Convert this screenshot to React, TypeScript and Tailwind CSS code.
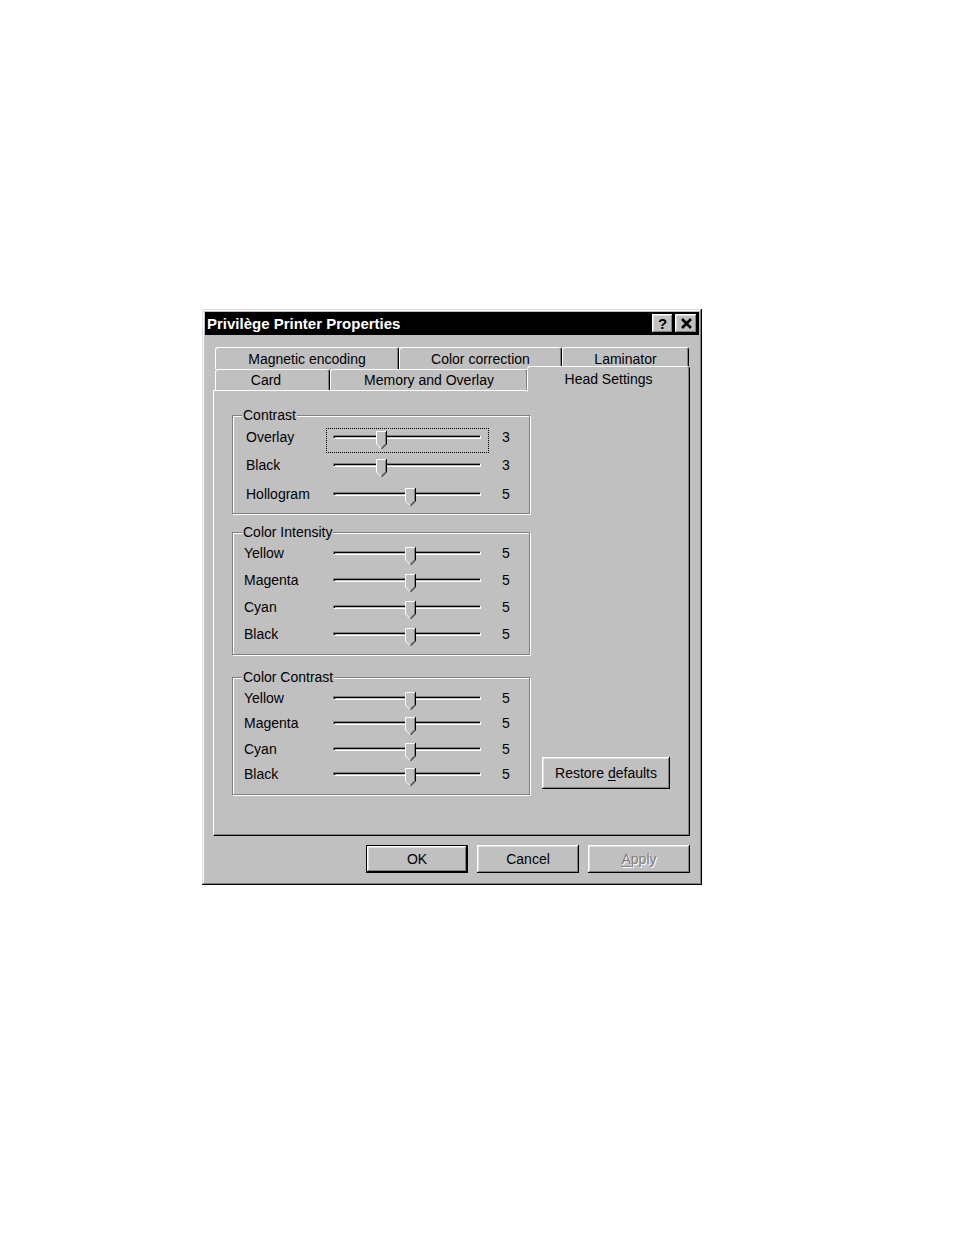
import React from "react";

type Row = { label: string; value: number; focus?: boolean };

const bevel =
  "shadow-[inset_-1px_-1px_0_#000,inset_1px_1px_0_#fff,inset_-2px_-2px_0_#808080,inset_2px_2px_0_#dfdfdf]";

function Thumb({ value }: { value: number }) {
  // track runs 0..10, ~14.5px a step
  const left = value * 14.5 - 1.5;
  return (
    <svg
      width="11"
      height="18"
      viewBox="0 0 11 18"
      className="absolute top-[-5px]"
      style={{ left }}
    >
      <path d="M0 0H11V13L5.5 18L0 13Z" fill="#c0c0c0" />
      <path d="M0.5 13V0.5H10" stroke="#fff" fill="none" />
      <path d="M0.5 13L5.5 18" stroke="#fff" fill="none" />
      <path d="M10.5 0V13L5.5 18" stroke="#000" fill="none" />
      <path d="M9.5 1V12.6L5.5 16.6" stroke="#808080" fill="none" />
    </svg>
  );
}

function Slider({ value, focus }: { value: number; focus?: boolean }) {
  return (
    <div className="relative h-[4px] w-[148px] shrink-0 border-l border-t border-[#808080] border-r-white border-b-white border-r border-b bg-[#c0c0c0] shadow-[inset_1px_1px_0_#000]">
      {focus && (
        <div className="absolute left-[-8px] top-[-8px] h-[25px] w-[163px] border border-dotted border-black" />
      )}
      <Thumb value={value} />
    </div>
  );
}

function Group({
  title,
  rows,
  boxClass,
  rowClass,
  labelClass,
}: {
  title: string;
  rows: Row[];
  boxClass: string;
  rowClass: string;
  labelClass: string;
}) {
  return (
    <div
      className={`relative w-[298px] border border-[#808080] shadow-[1px_1px_0_#fff,inset_1px_1px_0_#fff] ${boxClass}`}
    >
      <span className="absolute left-[9px] top-[-9px] bg-[#c0c0c0] px-[1px] leading-[16px]">
        {title}
      </span>
      {rows.map((r) => (
        <div key={r.label} className={`flex items-center ${rowClass}`}>
          <span className={`w-[100px] shrink-0 leading-[16px] ${labelClass}`}>{r.label}</span>
          <Slider value={r.value} focus={r.focus} />
          <span className="ml-[21px] leading-[16px]">{r.value}</span>
        </div>
      ))}
    </div>
  );
}

function Tab({ label, className }: { label: React.ReactNode; className: string }) {
  return (
    <div
      className={`flex h-full items-center justify-center rounded-t-[3px] border-l border-t border-r border-white border-r-black bg-[#c0c0c0] leading-[16px] shadow-[inset_-1px_0_0_#808080] ${className}`}
    >
      {label}
    </div>
  );
}

function Btn({
  children,
  className,
}: {
  children: React.ReactNode;
  className: string;
}) {
  return (
    <div className={`flex items-center justify-center bg-[#c0c0c0] leading-[16px] ${className}`}>
      {children}
    </div>
  );
}

const contrast: Row[] = [
  { label: "Overlay", value: 3, focus: true },
  { label: "Black", value: 3 },
  { label: "Hollogram", value: 5 },
];

const colours = ["Yellow", "Magenta", "Cyan", "Black"];

export default function App() {
  return (
    <div className="min-h-[1235px] bg-white pl-[202px] pt-[309px] font-['Liberation_Sans',Arial,sans-serif] text-[14px] text-black">
      <div className="flex h-[576px] w-[500px] flex-col bg-[#c0c0c0] p-[3px] shadow-[inset_-1px_-1px_0_#000,inset_1px_1px_0_#dfdfdf,inset_-2px_-2px_0_#808080,inset_2px_2px_0_#fff]">
        {/* title bar */}
        <div className="flex h-[23px] shrink-0 items-center justify-between bg-black pl-[2px] pr-[2px]">
          <span className="text-[15px] font-bold leading-[18px] text-white">
            Privilège Printer Properties
          </span>
          <div className="flex gap-[2px]">
            <div
              className={`flex h-[19px] w-[21px] items-center justify-center bg-[#c0c0c0] text-[15px] font-bold leading-none ${bevel}`}
            >
              ?
            </div>
            <div className={`flex h-[19px] w-[22px] items-center justify-center bg-[#c0c0c0] ${bevel}`}>
              <svg width="11" height="11" viewBox="0 0 11 11">
                <path d="M1 1L10 10M10 1L1 10" stroke="#000" strokeWidth="2.6" />
              </svg>
            </div>
          </div>
        </div>

        <div className="ml-[8px] w-[477px]">
          {/* back row of tabs */}
          <div className="mt-[12px] flex h-[22px] pl-[2px]">
            <Tab label="Magnetic encoding" className="w-[184px]" />
            <Tab label="Color correction" className="w-[163px]" />
            <Tab label="Laminator" className="w-[127px]" />
          </div>
          {/* front row of tabs */}
          <div className="flex h-[21px] items-end pl-[2px]">
            <Tab label="Card" className="w-[115px] pr-[13px]" />
            <Tab label="Memory and Overlay" className="w-[198px]" />
            <div className="relative z-10 -mb-[2px] -ml-[1px] flex h-[26px] w-[163px] items-center justify-center rounded-t-[3px] border-l border-t border-r border-white border-r-black bg-[#c0c0c0] pb-[2px] leading-[16px] shadow-[inset_-1px_0_0_#808080]">
              Head Settings
            </div>
          </div>

          {/* panel */}
          <div className="flex h-[446px] border-b border-l border-r border-t border-white border-b-black border-r-black pl-[18px] pt-[24px] shadow-[inset_-1px_-1px_0_#808080]">
            <div className="flex w-[298px] flex-col">
              <Group
                title="Contrast"
                rows={contrast}
                boxClass="h-[99px] pt-[6.25px]"
                rowClass="h-[28.5px]"
                labelClass="pl-[13px]"
              />
              <Group
                title="Color Intensity"
                rows={colours.map((c) => ({ label: c, value: 5 }))}
                boxClass="mt-[18px] h-[123px] pt-[6.5px]"
                rowClass="h-[27px]"
                labelClass="pl-[11px]"
              />
              <Group
                title="Color Contrast"
                rows={colours.map((c) => ({ label: c, value: 5 }))}
                boxClass="mt-[22px] h-[118px] pt-[7.3px]"
                rowClass="h-[25.33px]"
                labelClass="pl-[11px]"
              />
            </div>
            <div className="ml-[12px] flex h-[380px] flex-col justify-end pb-[6px]">
              <Btn className={`h-[32px] w-[128px] ${bevel}`}>
                <span>
                  Restore <u className="underline-offset-2">d</u>efaults
                </span>
              </Btn>
            </div>
          </div>

          {/* bottom buttons */}
          <div className="mt-[9px] flex justify-end gap-[9px] pr-[-1px]">
            <Btn
              className={`h-[28px] w-[102px] border border-black shadow-[inset_-1px_-1px_0_#000,inset_1px_1px_0_#fff,inset_-2px_-2px_0_#808080,inset_2px_2px_0_#dfdfdf]`}
            >
              OK
            </Btn>
            <Btn className={`h-[28px] w-[102px] ${bevel}`}>Cancel</Btn>
            <Btn className={`h-[28px] w-[102px] text-[#808080] [text-shadow:1px_1px_0_#fff] ${bevel}`}>
              <span>
                <u className="underline-offset-2">A</u>pply
              </span>
            </Btn>
          </div>
        </div>
      </div>
    </div>
  );
}
